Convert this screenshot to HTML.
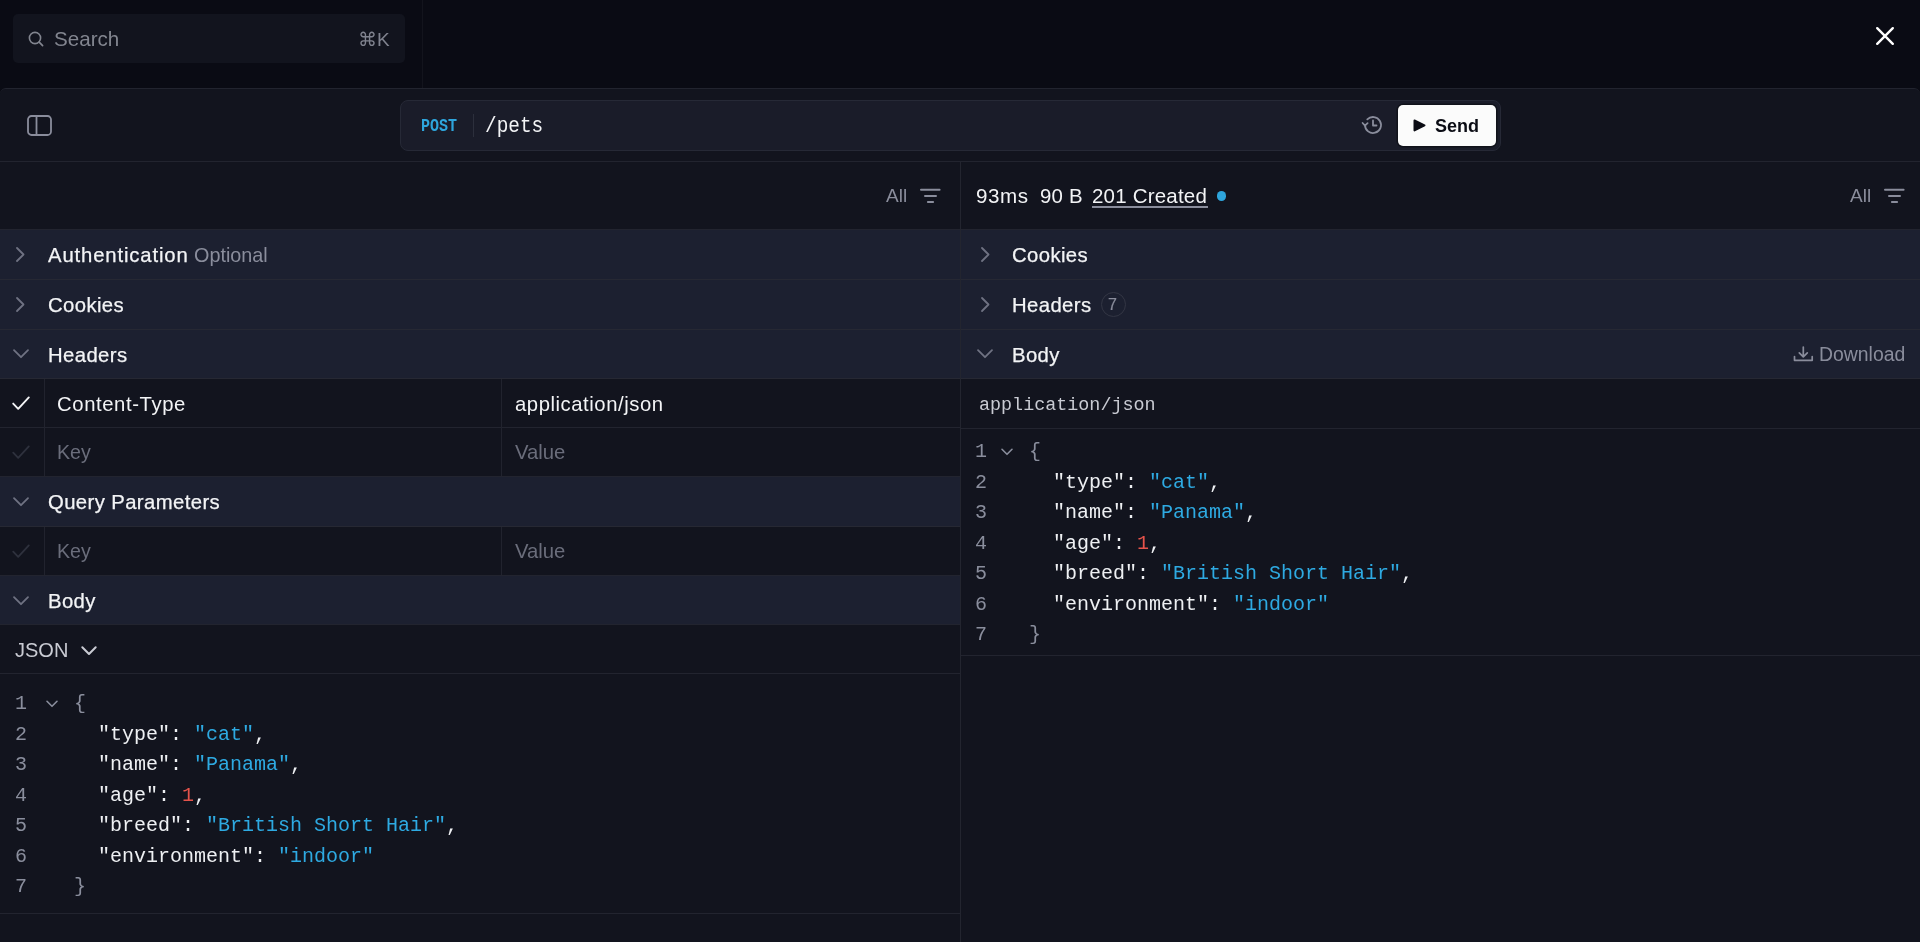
<!DOCTYPE html>
<html><head><meta charset="utf-8">
<style>
*{box-sizing:border-box;margin:0;padding:0}
html,body{width:1920px;height:942px;overflow:hidden;background:#0a0b14;font-family:"Liberation Sans",sans-serif;color:#f3f4f6}
.a{position:absolute}
.t{position:absolute;white-space:nowrap;line-height:1;will-change:transform}
.mono{font-family:"Liberation Mono",monospace}
svg{position:absolute;overflow:visible}
.hb{position:absolute;background:#1c2030}
.bl{position:absolute;height:1px;background:#22242f}
.hbl{background:#262833}
.vl{position:absolute;width:1px;background:#21232e}
.lbl{font-size:20.3px;letter-spacing:0.4px;color:#f3f4f6;-webkit-text-stroke:0.25px #f3f4f6}
.gray{color:#8a8d9c}
.dim{color:#6a6d7b}
.code{position:absolute;will-change:transform;font-family:"Liberation Mono",monospace;font-size:20px;line-height:30.58px;white-space:pre;color:#eef0f3}
.ln{position:absolute;will-change:transform;font-family:"Liberation Mono",monospace;font-size:20px;line-height:30.58px;white-space:pre;color:#8a8e9d;text-align:center}
.s{color:#2eaae2}
.n{color:#e5534b}
.p{color:#8a8e9d}
</style></head>
<body>
<!-- top bar -->
<div class="a" style="left:422px;top:0;width:1px;height:88px;background:#13141d"></div>
<div class="a" style="left:13px;top:14px;width:392px;height:49px;border-radius:5px;background:#12141e"></div>
<svg style="left:28px;top:31px" width="16" height="16" viewBox="0 0 16 16"><circle cx="7" cy="7" r="5.6" fill="none" stroke="#82858f" stroke-width="1.6"/><path d="M11.2 11.2 L14.6 14.6" stroke="#82858f" stroke-width="1.7" stroke-linecap="round"/></svg>
<div class="t" style="left:54px;top:29px;font-size:20.6px;color:#82858f">Search</div>
<div class="t" style="left:358px;top:29.5px;font-size:19px;color:#80838f">&#8984;K</div>
<svg style="left:1876px;top:27px" width="18" height="18" viewBox="0 0 18 18"><path d="M1.2 1.2 L16.8 16.8 M16.8 1.2 L1.2 16.8" stroke="#fff" stroke-width="2.4" stroke-linecap="round"/></svg>

<!-- panel -->
<div class="a" style="left:0;top:88px;width:1920px;height:854px;background:#12141e;border-top:1px solid #22242f;border-radius:6px 6px 0 0"></div>
<!-- address row -->
<svg style="left:27px;top:115px" width="25" height="21" viewBox="0 0 25 21"><rect x="1" y="1" width="23" height="19" rx="3.5" fill="none" stroke="#8a8d9c" stroke-width="1.8"/><path d="M9.5 1 V20" stroke="#8a8d9c" stroke-width="1.8"/></svg>
<div class="a" style="left:400px;top:100px;width:1101px;height:51px;border-radius:8px;background:#1a1c29;border:1px solid #262936"></div>
<div class="t mono" style="left:421px;top:118px;font-size:15px;font-weight:bold;color:#2ea5dc;transform:scaleY(1.2);transform-origin:0 0">POST</div>
<div class="a" style="left:473px;top:114px;width:1px;height:23px;background:#2c2f3c"></div>
<div class="t mono" style="left:485px;top:116px;font-size:19.4px;color:#f3f4f6;transform:scaleY(1.16);transform-origin:0 0">/pets</div>
<svg style="left:1361px;top:115px" width="22" height="20" viewBox="0 0 22 20"><path d="M4 10 A8 8 0 1 0 6.3 4.4" fill="none" stroke="#8a8d9c" stroke-width="1.8" stroke-linecap="round"/><path d="M1.6 8 L4 10.6 L6.6 8.2" fill="none" stroke="#8a8d9c" stroke-width="1.8" stroke-linecap="round" stroke-linejoin="round"/><path d="M12 5.5 V10.5 H15.5" fill="none" stroke="#8a8d9c" stroke-width="1.8" stroke-linecap="round" stroke-linejoin="round"/></svg>
<div class="a" style="left:1398px;top:105px;width:98px;height:41px;border-radius:5px;background:#fbfbfb;box-shadow:0 0 0 1.5px #10121a"></div>
<svg style="left:1413px;top:119px" width="13" height="13" viewBox="0 0 13 13"><path d="M1.5 1.5 L11.5 6.4 L1.5 11.4 Z" fill="#0b0c14" stroke="#0b0c14" stroke-width="2" stroke-linejoin="round"/></svg>
<div class="t" style="left:1435px;top:117px;font-size:18px;font-weight:bold;color:#0b0c14">Send</div>
<div class="bl" style="left:0;top:161px;width:1920px"></div>

<!-- section backgrounds (left+right) -->
<div class="hb" style="left:0;top:230px;width:1920px;height:148px"></div>
<div class="hb" style="left:0;top:477px;width:960px;height:49px"></div>
<div class="hb" style="left:0;top:576px;width:960px;height:48px"></div>
<!-- horizontal borders -->
<div class="bl" style="left:0;top:229px;width:1920px"></div>
<div class="bl hbl" style="left:0;top:279px;width:1920px"></div>
<div class="bl hbl" style="left:0;top:329px;width:1920px"></div>
<div class="bl hbl" style="left:0;top:378px;width:1920px"></div>
<div class="bl" style="left:0;top:427px;width:960px"></div>
<div class="bl" style="left:0;top:476px;width:960px"></div>
<div class="bl hbl" style="left:0;top:526px;width:960px"></div>
<div class="bl" style="left:0;top:575px;width:960px"></div>
<div class="bl" style="left:0;top:624px;width:960px"></div>
<div class="bl" style="left:0;top:673px;width:960px"></div>
<div class="bl" style="left:0;top:913px;width:960px"></div>
<div class="bl" style="left:961px;top:428px;width:959px"></div>
<div class="bl" style="left:961px;top:655px;width:959px"></div>
<!-- vertical lines -->
<div class="vl" style="left:960px;top:162px;height:780px;background:#23252f"></div>
<div class="vl" style="left:44px;top:379px;height:97px"></div>
<div class="vl" style="left:501px;top:379px;height:97px"></div>
<div class="vl" style="left:44px;top:527px;height:48px"></div>
<div class="vl" style="left:501px;top:527px;height:48px"></div>

<!-- LEFT filter row -->
<div class="t gray" style="left:886px;top:186px;font-size:19px">All</div>
<svg style="left:919.5px;top:188px" width="21" height="16" viewBox="0 0 21 16"><path d="M1 1.8 H19.6 M5 7.9 H16 M7.9 14 H13.1" stroke="#8a8d9c" stroke-width="2" stroke-linecap="round"/></svg>

<!-- chevrons left -->
<svg style="left:15px;top:247px" width="11" height="15" viewBox="0 0 11 15"><path d="M2 1 L8.5 7.5 L2 14" fill="none" stroke="#6f7282" stroke-width="1.8" stroke-linecap="round" stroke-linejoin="round"/></svg>
<svg style="left:15px;top:297px" width="11" height="15" viewBox="0 0 11 15"><path d="M2 1 L8.5 7.5 L2 14" fill="none" stroke="#6f7282" stroke-width="1.8" stroke-linecap="round" stroke-linejoin="round"/></svg>
<svg style="left:13px;top:349px" width="16" height="10" viewBox="0 0 16 10"><path d="M1 1.2 L8 8.2 L15 1.2" fill="none" stroke="#6f7282" stroke-width="1.8" stroke-linecap="round" stroke-linejoin="round"/></svg>
<svg style="left:13px;top:497px" width="16" height="10" viewBox="0 0 16 10"><path d="M1 1.2 L8 8.2 L15 1.2" fill="none" stroke="#6f7282" stroke-width="1.8" stroke-linecap="round" stroke-linejoin="round"/></svg>
<svg style="left:13px;top:596px" width="16" height="10" viewBox="0 0 16 10"><path d="M1 1.2 L8 8.2 L15 1.2" fill="none" stroke="#6f7282" stroke-width="1.8" stroke-linecap="round" stroke-linejoin="round"/></svg>

<div class="t lbl" style="left:48px;top:245px;letter-spacing:0.86px">Authentication</div>
<div class="t gray" style="left:194px;top:246px;font-size:19.8px">Optional</div>
<div class="t lbl" style="left:48px;top:295px">Cookies</div>
<div class="t lbl" style="left:48px;top:345px">Headers</div>
<div class="t lbl" style="left:48px;top:492px">Query Parameters</div>
<div class="t lbl" style="left:48px;top:591px">Body</div>

<!-- table content -->
<svg style="left:12px;top:396px" width="18" height="15" viewBox="0 0 18 15"><path d="M1.2 7.6 L6.2 12.8 L16.8 1.4" fill="none" stroke="#f3f4f6" stroke-width="1.9" stroke-linecap="round" stroke-linejoin="round"/></svg>
<svg style="left:12px;top:445px" width="18" height="15" viewBox="0 0 18 15"><path d="M1.2 7.6 L6.2 12.8 L16.8 1.4" fill="none" stroke="#2e313d" stroke-width="1.8" stroke-linecap="round" stroke-linejoin="round"/></svg>
<svg style="left:12px;top:544px" width="18" height="15" viewBox="0 0 18 15"><path d="M1.2 7.6 L6.2 12.8 L16.8 1.4" fill="none" stroke="#2e313d" stroke-width="1.8" stroke-linecap="round" stroke-linejoin="round"/></svg>
<div class="t" style="left:57px;top:394px;font-size:20.3px;letter-spacing:0.6px">Content-Type</div>
<div class="t" style="left:515px;top:394px;font-size:20.3px;letter-spacing:0.55px">application/json</div>
<div class="t dim" style="left:57px;top:443px;font-size:19.6px">Key</div>
<div class="t dim" style="left:515px;top:442px;font-size:20.3px">Value</div>
<div class="t dim" style="left:57px;top:542px;font-size:19.6px">Key</div>
<div class="t dim" style="left:515px;top:541px;font-size:20.3px">Value</div>

<div class="t" style="left:15px;top:640px;font-size:20px;color:#c9cbd3">JSON</div>
<svg style="left:81px;top:646px" width="16" height="10" viewBox="0 0 16 10"><path d="M1.3 1.3 L8 8 L14.7 1.3" fill="none" stroke="#c9cbd3" stroke-width="2" stroke-linecap="round" stroke-linejoin="round"/></svg>

<!-- left code -->
<div class="ln" style="left:15px;top:688.5px;width:12px">1
2
3
4
5
6
7</div>
<svg style="left:46px;top:699.5px" width="12" height="8" viewBox="0 0 12 8"><path d="M1 1.3 L6 6.3 L11 1.3" fill="none" stroke="#8a8e9d" stroke-width="1.6" stroke-linecap="round" stroke-linejoin="round"/></svg>
<div class="code" style="left:73.5px;top:688.5px"><span class="p">{</span>
  "type": <span class="s">"cat"</span>,
  "name": <span class="s">"Panama"</span>,
  "age": <span class="n">1</span>,
  "breed": <span class="s">"British Short Hair"</span>,
  "environment": <span class="s">"indoor"</span>
<span class="p">}</span></div>

<!-- RIGHT filter row -->
<div class="t" style="left:976px;top:186px;font-size:20.6px;letter-spacing:0.6px">93ms</div>
<div class="t" style="left:1039.5px;top:186px;font-size:20.4px;letter-spacing:0.2px">90 B</div>
<div class="t" style="left:1092px;top:186px;font-size:20.5px;letter-spacing:0.2px">201 Created</div>
<div class="a" style="left:1092px;top:206px;width:116px;height:2px;background:#8a8d9c"></div>
<div class="a" style="left:1216.5px;top:191.3px;width:9.5px;height:9.5px;border-radius:50%;background:#2ea5dc"></div>
<div class="t gray" style="left:1850px;top:186px;font-size:19px">All</div>
<svg style="left:1883.5px;top:188px" width="21" height="16" viewBox="0 0 21 16"><path d="M1 1.8 H19.6 M5 7.9 H16 M7.9 14 H13.1" stroke="#8a8d9c" stroke-width="2" stroke-linecap="round"/></svg>

<!-- RIGHT sections -->
<svg style="left:980px;top:247px" width="11" height="15" viewBox="0 0 11 15"><path d="M2 1 L8.5 7.5 L2 14" fill="none" stroke="#6f7282" stroke-width="1.8" stroke-linecap="round" stroke-linejoin="round"/></svg>
<svg style="left:980px;top:297px" width="11" height="15" viewBox="0 0 11 15"><path d="M2 1 L8.5 7.5 L2 14" fill="none" stroke="#6f7282" stroke-width="1.8" stroke-linecap="round" stroke-linejoin="round"/></svg>
<svg style="left:977px;top:349px" width="16" height="10" viewBox="0 0 16 10"><path d="M1 1.2 L8 8.2 L15 1.2" fill="none" stroke="#6f7282" stroke-width="1.8" stroke-linecap="round" stroke-linejoin="round"/></svg>
<div class="t lbl" style="left:1012px;top:245px">Cookies</div>
<div class="t lbl" style="left:1012px;top:295px">Headers</div>
<div class="a" style="left:1101px;top:292px;width:25px;height:25px;border-radius:50%;border:1px solid #333644"></div>
<div class="t gray" style="left:1107.5px;top:296.5px;font-size:16px;-webkit-text-stroke:0.2px #8a8d9c">7</div>
<div class="t lbl" style="left:1012px;top:345px">Body</div>
<svg style="left:1793px;top:346px" width="21" height="16" viewBox="0 0 21 16"><path d="M10.3 1 V10.5 M6.3 6.8 L10.3 10.8 L14.3 6.8 M1.5 10.5 V14.3 H19.2 V10.5" fill="none" stroke="#8a8d9c" stroke-width="1.7" stroke-linecap="round" stroke-linejoin="round"/></svg>
<div class="t gray" style="left:1819px;top:345px;font-size:19.4px">Download</div>

<div class="t mono" style="left:979px;top:397px;font-size:18.4px;color:#c9cbd3">application/json</div>

<!-- right code -->
<div class="ln" style="left:975px;top:437px;width:12px">1
2
3
4
5
6
7</div>
<svg style="left:1001px;top:447.5px" width="12" height="8" viewBox="0 0 12 8"><path d="M1 1.3 L6 6.3 L11 1.3" fill="none" stroke="#8a8e9d" stroke-width="1.6" stroke-linecap="round" stroke-linejoin="round"/></svg>
<div class="code" style="left:1029px;top:437px"><span class="p">{</span>
  "type": <span class="s">"cat"</span>,
  "name": <span class="s">"Panama"</span>,
  "age": <span class="n">1</span>,
  "breed": <span class="s">"British Short Hair"</span>,
  "environment": <span class="s">"indoor"</span>
<span class="p">}</span></div>
</body></html>
